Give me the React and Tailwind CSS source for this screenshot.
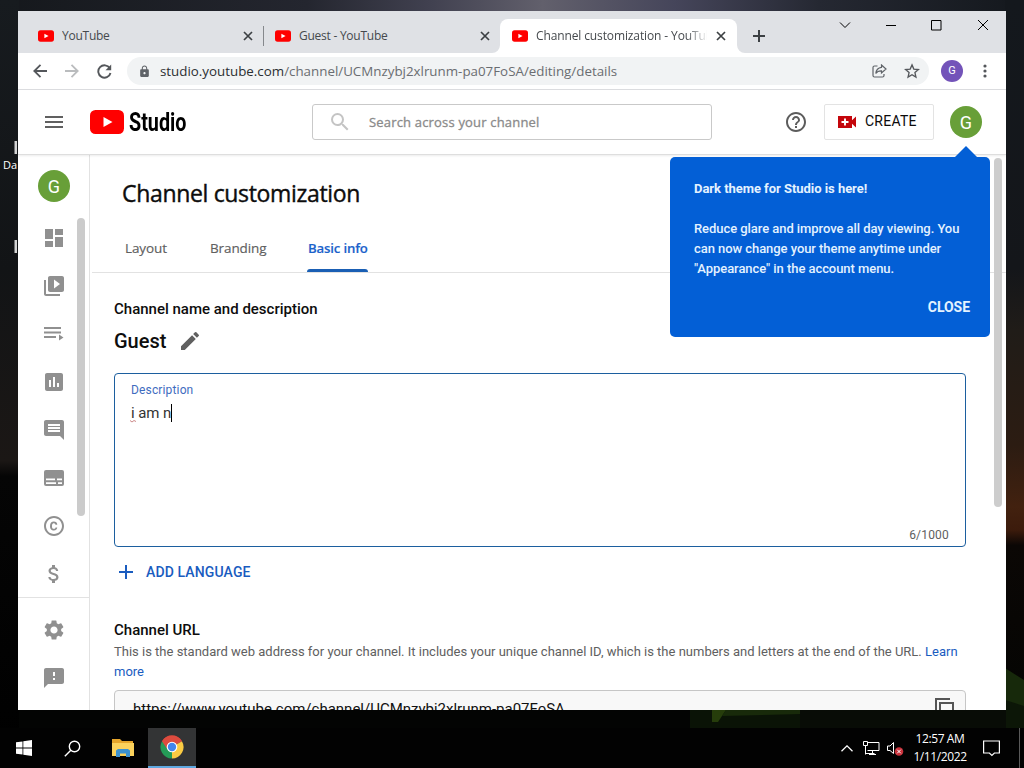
import React from 'react';
import {
  MdDashboard, MdVideoLibrary, MdInsertChart, MdComment, MdCopyright, MdAttachMoney,
  MdSettings, MdFeedback, MdEdit, MdHelpOutline, MdSearch, MdMenu, MdLock,
} from 'react-icons/md';

const tabs = [
  { title: 'YouTube', active: false },
  { title: 'Guest - YouTube', active: false },
  { title: 'Channel customization - YouTube', active: true },
];

function PlayBadge({ className }) {
  return (
    <svg className={className} viewBox="0 0 34 24">
      <rect width="34" height="24" rx="5.5" fill="#f00" />
      <path d="M13.5 7v10l9-5z" fill="#fff" />
    </svg>
  );
}

function PlaylistIcon() {
  return (
    <svg width="24" height="24" viewBox="0 0 24 24" fill="currentColor">
      <path d="M2 5h17v2H2zM2 9.5h17v2H2zM2 14h12v2H2zM17 12.500v6l4.500-3z" />
    </svg>
  );
}

function SubtitlesIcon() {
  return (
    <svg width="24" height="24" viewBox="0 0 24 24" fill="currentColor">
      <rect x="2" y="4" width="20" height="16" rx="2" />
      <path d="M4 12.500h9v1.700H4zM15 12.500h5v1.700h-5zM4 16.200h10v1.700H4zM16 16.200h4v1.700h-4z" fill="#fff" />
    </svg>
  );
}

const navIcons = [MdDashboard, MdVideoLibrary, PlaylistIcon, MdInsertChart, MdComment, SubtitlesIcon, MdCopyright, MdAttachMoney];

function Wallpaper() {
  return (
    <svg className="absolute inset-0" width="1024" height="768" viewBox="0 0 1024 768">
      <defs>
        <linearGradient id="sky" x1="0" x2="1" y1="0" y2="0">
          <stop offset="0" stopColor="#15181c" />
          <stop offset="0.3" stopColor="#24262f" />
          <stop offset="0.42" stopColor="#414150" />
          <stop offset="0.53" stopColor="#62606c" />
          <stop offset="0.66" stopColor="#45455a" />
          <stop offset="0.8" stopColor="#252832" />
          <stop offset="1" stopColor="#14181d" />
        </linearGradient>
        <linearGradient id="left" x1="0" x2="0" y1="0" y2="1">
          <stop offset="0" stopColor="#171b1f" />
          <stop offset="0.35" stopColor="#121416" />
          <stop offset="0.6" stopColor="#1b1715" />
          <stop offset="0.62" stopColor="#050505" />
          <stop offset="1" stopColor="#000" />
        </linearGradient>
        <linearGradient id="right" x1="0" x2="0" y1="0" y2="1">
          <stop offset="0" stopColor="#14181d" />
          <stop offset="0.35" stopColor="#14161a" />
          <stop offset="0.43" stopColor="#201c18" />
          <stop offset="0.58" stopColor="#2c1c12" />
          <stop offset="0.66" stopColor="#42210f" />
          <stop offset="0.69" stopColor="#3c1b0c" />
          <stop offset="0.71" stopColor="#0b0705" />
          <stop offset="1" stopColor="#020402" />
        </linearGradient>
      </defs>
      <rect width="1024" height="768" fill="#030403" />
      <rect width="1024" height="12" fill="url(#sky)" />
      <rect y="0" width="19" height="768" fill="url(#left)" />
      <rect x="1005" width="19" height="768" fill="url(#right)" />
      <path d="M1005 668l19 12v48h-19z" fill="#17290b" />
      <path d="M1005 700l19 6v22h-19z" fill="#0c1607" />
      <path d="M690 710h110v18H690z" fill="#0a1306" />
      <path d="M712 710h14l-8 12h-6z" fill="#263d0b" />
      <path d="M726 710h76v4l-80 2z" fill="#182a0a" />
      <path d="M800 710h206v18H800z" fill="#080c06" />
      <path d="M14.500 141h2.500v13h-2.500zM14.500 240h2.500v13h-2.500z" fill="#d5d5d5" />
    </svg>
  );
}

function TabStrip() {
  return (
    <div className="flex h-[42px] bg-[#dfe1e5] pt-2 font-['Open_Sans','Noto_Sans',sans-serif]">
      <div className="ml-[9px] flex">
        {tabs.map((tab, i) => (
          <div
            key={tab.title}
            className={`relative flex h-[34px] items-center text-[12px] text-[#45494d] ${
              tab.active ? 'ml-[-1px] w-[237px] rounded-t-lg bg-white pl-3' : 'w-[237px] pl-[11px]'
            }`}
          >
            <PlayBadge className="h-3 w-4 shrink-0" />
            <div
              className={`ml-2 overflow-hidden whitespace-nowrap ${
                tab.active ? 'w-[171px] tracking-[-0.12px] [mask-image:linear-gradient(to_right,black_150px,transparent_172px)]' : 'w-[172px] tracking-[-0.25px]'
              }`}
            >
              {tab.title}
            </div>
            <svg className="ml-[9px] shrink-0" width="10" height="10" viewBox="0 0 10 10" stroke="#3c4043" strokeWidth="1.700">
              <path d="M1 1l8 8M9 1l-8 8" />
            </svg>
            {i === 0 && <div className="absolute right-0 top-[7px] h-5 w-px bg-[#85888c]" />}
            {tab.active && (
              <>
                <svg className="absolute -left-2 bottom-0" width="8" height="8"><path d="M8 0v8H0a8 8 0 0 0 8-8z" fill="#fff" /></svg>
                <svg className="absolute -right-2 bottom-0" width="8" height="8"><path d="M0 0v8h8a8 8 0 0 1-8-8z" fill="#fff" /></svg>
              </>
            )}
          </div>
        ))}
      </div>
      <svg className="ml-4 mt-[11px]" width="12" height="12" viewBox="0 0 12 12" stroke="#3c4043" strokeWidth="2"><path d="M6 0v12M0 6h12" /></svg>
      <div className="ml-auto mr-[17px] flex items-start gap-[35px] text-black">
        <svg width="12" height="12" viewBox="0 0 12 12" fill="none" stroke="currentColor"><path d="M1 3.500l5 5 5-5" /></svg>
        <svg width="10" height="12" viewBox="0 0 10 12" stroke="currentColor"><path d="M0 6.500h10" /></svg>
        <svg width="11" height="12" viewBox="0 0 11 12" fill="none" stroke="currentColor"><path d="M.5 1.500h9.500v9.500H.5z" /></svg>
        <svg width="12" height="12" viewBox="0 0 12 12" stroke="currentColor"><path d="M1 1l10 10M11 1L1 11" /></svg>
      </div>
    </div>
  );
}

function Toolbar() {
  return (
    <div className="flex h-[37px] items-center border-b border-[#dcdde0] bg-white pl-[15px]">
      <svg width="14" height="14" viewBox="0 0 14 14" fill="none" stroke="#54575b" strokeWidth="1.800"><path d="M14 7H1.500M7.500 .8L1.300 7l6.200 6.200" /></svg>
      <svg className="ml-[18px]" width="14" height="14" viewBox="0 0 14 14" fill="none" stroke="#babcbe" strokeWidth="1.800"><path d="M0 7h12.500M6.500 .8L12.700 7l-6.200 6.200" /></svg>
      <svg className="ml-[18px]" width="15" height="15" viewBox="0 0 15 15" fill="none" stroke="#54575b" strokeWidth="1.900">
        <path d="M12.800 4.300A6.200 6.200 0 1 0 13.500 9" />
        <path d="M14.200 .6v5.700H8.500z" fill="#54575b" stroke="none" />
      </svg>
      <div className="ml-[15px] flex h-7 w-[802px] items-center rounded-full bg-[#f1f3f4] pl-[11px]">
        <MdLock size={13} color="#5f6368" />
        <div className="ml-[9px] whitespace-nowrap pt-px font-['Open_Sans','Noto_Sans',sans-serif] text-[13.350px] text-[#6a6d71]">
          <span className="text-[#2b2e31]">studio.youtube.com</span>/channel/UCMnzybj2xlrunm-pa07FoSA/editing/details
        </div>
        <svg className="ml-auto" width="15" height="14" viewBox="0 0 15 14" fill="none" stroke="#5f6368" strokeWidth="1.200">
          <path d="M5.500 2H2.500Q1 2 1 3.500v8Q1 13 2.500 13h8Q12 13 12 11.500V10" />
          <path d="M9.500 1l4.500 4-4.500 4V6.800Q5.500 6.700 3.800 9.500 4.300 4 9.500 3.300z" />
        </svg>
        <svg className="ml-[17px] mr-[9px]" width="16" height="16" viewBox="0 0 24 24" fill="none" stroke="#54575b" strokeWidth="2">
          <path d="M12 2.800l2.700 6.400 6.900.6-5.200 4.600 1.500 6.800-5.900-3.600-5.900 3.600 1.500-6.800L2.400 9.800l6.900-.6z" />
        </svg>
      </div>
      <div className="ml-3 flex size-[22px] items-center justify-center rounded-full bg-[#7353b9] font-['Roboto',sans-serif] text-[11px] text-white">G</div>
      <svg className="ml-5" width="4" height="14" viewBox="0 0 4 14" fill="#54575b"><circle cx="2" cy="2" r="1.600" /><circle cx="2" cy="7" r="1.600" /><circle cx="2" cy="12" r="1.600" /></svg>
    </div>
  );
}

function StudioHeader() {
  return (
    <div className="relative z-10 flex h-[65px] items-center border-b border-[#dedede] bg-white pl-6 shadow-[0_1px_2px_rgba(0,0,0,0.08)]">
      <MdMenu size={24} color="#606060" />
      <PlayBadge className="ml-6 h-6 w-[34px]" />
      <div className="ml-[5px] w-[60px] font-['Roboto',sans-serif] text-[26px] font-bold leading-none text-black">
        <div className="w-[100px] origin-left scale-x-[0.76]">Studio</div>
      </div>
      <div className="ml-[123px] flex h-9 w-[400px] items-center rounded-[3px] border border-[#c9c9c9] pl-[15px]">
        <MdSearch size={24} color="#c4c4c4" />
        <div className="ml-[17px] pt-px font-['Open_Sans',sans-serif] text-[13px] tracking-[0.18px] text-[#8a8a8a] [-webkit-text-stroke:0.3px]">Search across your channel</div>
      </div>
      <MdHelpOutline className="ml-[72px]" size={24} color="#5c5c5c" />
      <div className="ml-4 flex h-9 w-[110px] items-center rounded-[2px] border border-[#e3e3e3] pl-[13px]">
        <svg width="18" height="12" viewBox="0 0 18 12">
          <path d="M0 0h14v4.200L18 .6v10.800l-4-3.600V12H0z" fill="#c4060c" />
          <path d="M7 2.500v7M3.500 6h7" stroke="#fff" strokeWidth="1.900" />
        </svg>
        <div className="ml-[9px] pb-px font-['Roboto',sans-serif] text-[14px] tracking-[0.25px] text-[#0b0b0b]">CREATE</div>
      </div>
      <div className="ml-4 flex size-8 items-center justify-center rounded-full bg-[#689f38] font-['Roboto',sans-serif] text-[18px] text-white">G</div>
    </div>
  );
}

function Sidebar() {
  return (
    <div className="relative h-[555px] w-[72px] shrink-0 border-r border-[#e2e2e2] pt-[15px] text-[#909090]">
      <div className="ml-5 flex size-8 items-center justify-center rounded-full bg-[#689f38] font-['Roboto',sans-serif] text-[18px] text-white">G</div>
      <div className="ml-6 mt-6 flex flex-col gap-6">
        {navIcons.map((Icon, i) => <Icon key={i} size={24} />)}
      </div>
      <div className="mt-[11px] flex flex-col gap-6 border-t border-[#e2e2e2] pl-6 pt-5">
        <MdSettings size={24} />
        <MdFeedback size={24} />
      </div>
      <div className="absolute left-[59px] top-[63px] h-[298px] w-2 rounded-full bg-[#cbcbcb]" />
    </div>
  );
}

function ChannelForm() {
  return (
    <div className="relative h-[555px] flex-1 overflow-hidden font-['Roboto',sans-serif]">
      <div className="ml-8 mt-[22px] font-['Open_Sans','Noto_Sans',sans-serif] text-[23px] leading-8 tracking-[-0.33px] text-[#0d0d0d] [-webkit-text-stroke:0.4px]">Channel customization</div>
      <div className="ml-[2px] mt-[15px] flex h-[49px] border-b border-[#e2e2e2] pl-[33px] font-['Open_Sans','Noto_Sans',sans-serif] text-[13.500px] leading-[49px] tracking-[-0.1px] text-[#606060] [-webkit-text-stroke:0.15px]">
        <div className="w-[85px]">Layout</div>
        <div className="w-[97px]">Branding</div>
        <div className="relative w-[61px] whitespace-nowrap pl-px text-[13.200px] font-semibold tracking-[-0.16px] text-[#1a62cb]">
          Basic info
          <div className="absolute bottom-0 left-0 h-[3px] w-full rounded-t-sm bg-[#1a5fb4]" />
        </div>
      </div>
      <div className="ml-6 mt-[26px] w-[852px]">
        <div className="text-[15px] font-medium leading-5 text-[#0d0d0d]">Channel name and description</div>
        <div className="mt-[10px] flex h-6 items-center">
          <span className="text-[20px] font-medium text-[#0d0d0d]">Guest</span>
          <MdEdit className="ml-3" size={24} color="#606060" />
        </div>
        <div className="relative mt-5 h-[174px] rounded border border-[#1c5f9f] pl-4 pt-[7px]">
          <div className="text-[12px] leading-[18px] tracking-[0.15px] text-[#3f6cc0]">Description</div>
          <div className="mt-[5px] flex h-[18px] items-center text-[15px] tracking-[-0.1px] text-[#333]">
            <span>i am n</span>
            <div className="h-[18px] w-px bg-black" />
          </div>
          <svg className="absolute left-[15px] top-[46px]" width="6" height="3" fill="none" stroke="#c88"><path d="M0 .5l2 1.500 2-1.500 2 1" /></svg>
          <div className="absolute bottom-[2px] right-4 text-[12px] tracking-[0.2px] text-[#606060]">6/1000</div>
        </div>
        <div className="mt-[15px] flex h-5 items-center pl-[5px]">
          <svg width="14" height="14" viewBox="0 0 14 14" stroke="#1a5cbf" strokeWidth="2"><path d="M7 0v14M0 7h14" /></svg>
          <div className="ml-[13px] text-[14px] font-medium tracking-[0.12px] text-[#1a5cbf]">ADD LANGUAGE</div>
        </div>
        <div className="mt-[38px] text-[15px] font-medium leading-5 text-[#0d0d0d]">Channel URL</div>
        <div className="mt-[2px] text-[13px] leading-5 text-[#606060]">
          This is the standard web address for your channel. It includes your unique channel ID, which is the numbers and letters at the end of the URL. <span className="text-[#1a5cbf]">Learn<br />more</span>
        </div>
        <div className="mt-2 flex h-10 items-start rounded border border-[#c6c6c6] bg-[#f8f8f8] pl-[18px]">
          <div className="mt-2 whitespace-nowrap text-[15px] leading-5 text-[#111]">https://www.youtube.com/channel/UCMnzybj2xlrunm-pa07FoSA</div>
          <svg className="ml-auto mr-[10px] mt-[7px]" width="20" height="22" viewBox="0 0 20 22" fill="none" stroke="#555" strokeWidth="2">
            <path d="M1 18V1h14M5 5h13v16H5z" />
          </svg>
        </div>
      </div>
      <div className="absolute right-1 top-[3px] h-[349px] w-2 rounded-full bg-[#cdcdcd]" />
    </div>
  );
}

function ThemeTip() {
  return (
    <div className="absolute left-[652px] top-[146px] z-20 h-[180px] w-[320px] rounded-[5px] bg-[#035fd6] px-6 pt-[22px] font-['Roboto',sans-serif] text-[13px] font-medium leading-5 text-[#e4f2ff]">
      <svg className="absolute right-3 top-[-11px]" width="24" height="12" viewBox="0 0 24 12"><path d="M12 0l12 12H0z" fill="#035fd6" /></svg>
      <div className="font-bold tracking-[-0.04px]">Dark theme for Studio is here!</div>
      <div className="mt-5 whitespace-nowrap tracking-[-0.06px]">
        Reduce glare and improve all day viewing. You<br />
        can now change your theme anytime under<br />
        "Appearance" in the account menu.
      </div>
      <div className="mr-[-4px] mt-[18px] text-right text-[14px] font-bold tracking-[-0.05px]">CLOSE</div>
    </div>
  );
}

function Taskbar() {
  return (
    <div className="relative mt-[18px] flex h-10 items-center bg-[#020202] font-['Open_Sans','Noto_Sans',sans-serif] text-white">
      <svg className="ml-4" width="16" height="16" viewBox="0 0 16 16" fill="#fff">
        <path d="M0 2.300l6.500-.9v6.100H0zM7.300 1.300L16 0v7.500H7.300zM0 8.400h6.500v6.200L0 13.700zM7.300 8.400H16V16l-8.700-1.200z" />
      </svg>
      <svg className="ml-8" width="17" height="17" viewBox="0 0 17 17" fill="none" stroke="#fff" strokeWidth="1.400">
        <circle cx="10.500" cy="6.500" r="5.200" /><path d="M6.800 10.300L.8 16.300" />
      </svg>
      <svg className="ml-[31px]" width="22" height="18" viewBox="0 0 22 18">
        <path d="M0 0h8l2 2h11v15H0z" fill="#e5a52b" />
        <path d="M0 4h22v13H0z" fill="#fbd25c" />
        <path d="M4 18v-6.500l2-1.500h10l2 1.500V18h-4v-3.500H8V18z" fill="#3c92cf" />
      </svg>
      <div className="ml-[14px] flex h-10 w-12 items-center justify-center border-b-2 border-[#5fa8e0] bg-[#333435]">
        <svg width="24" height="24" viewBox="0 0 24 24">
          <path d="M12 12L2.040 6.250A11.500 11.500 0 0 1 21.960 6.250z" fill="#dd4b3e" />
          <path d="M12 12L2.040 6.250A11.500 11.500 0 0 0 12 23.500z" fill="#259b57" />
          <path d="M12 12L12 23.500A11.500 11.500 0 0 0 21.960 6.250z" fill="#fbcb43" />
          <path d="M2.040 6.250L7.400 14.600 12 12l-2-4z" fill="#259b57" />
          <path d="M2.040 6.250A11.500 11.500 0 0 1 21.960 6.250L12 6.800 7.500 14.500z" fill="#dd4b3e" />
          <circle cx="12" cy="12" r="5.300" fill="#fff" />
          <circle cx="12" cy="12" r="4.200" fill="#4385ec" />
        </svg>
      </div>
      <div className="ml-auto flex items-center">
        <svg width="12" height="7" viewBox="0 0 12 7" fill="none" stroke="#fff" strokeWidth="1.300"><path d="M.5 6.300L6 .9l5.500 5.400" /></svg>
        <svg className="ml-[10px]" width="17" height="14" viewBox="0 0 17 14" fill="none" stroke="#fff">
          <path d="M5 1.500h11v8H4.500M.5 .5h4v4h-4zM2.500 4.500v9M2.500 12.500h9M9.500 9.500v3M6 13.500h7" />
        </svg>
        <svg className="ml-[7px]" width="17" height="15" viewBox="0 0 17 15">
          <path d="M.5 5h2.500L6.500 1.500v11L3 9.500H.5z" fill="none" stroke="#fff" />
          <circle cx="12" cy="10.500" r="4.300" fill="#c9323c" />
          <path d="M10.200 8.700l3.600 3.600M13.800 8.700l-3.600 3.600" stroke="#fff" />
        </svg>
        <div className="ml-2 w-[56px] whitespace-nowrap text-center text-[12px] leading-[18px] tracking-[-0.4px]">
          <div>12:57 AM</div>
          <div>1/11/2022</div>
        </div>
        <svg className="ml-[15px]" width="17" height="17" viewBox="0 0 17 17" fill="none" stroke="#fff" strokeWidth="1.200"><path d="M.6 1h15.800v12h-5l-2.500 2.500L6.400 13H.6z" /></svg>
        <div className="ml-[19px] mr-1 h-10 w-px bg-[#5a5a5a]" />
      </div>
    </div>
  );
}

export default function App() {
  return (
    <div className="relative h-[768px] w-[1024px] overflow-hidden bg-black">
      <Wallpaper />
      <div className="relative h-[710px] pl-[18px] pt-[11px]">
        <div className="absolute left-[3px] top-[158px] w-[15px] overflow-hidden font-['Open_Sans',sans-serif] text-[11px] leading-[14px] text-white">Da</div>
        <div className="relative h-[699px] w-[988px] overflow-hidden bg-white">
          <TabStrip />
          <Toolbar />
          <StudioHeader />
          <div className="flex">
            <Sidebar />
            <ChannelForm />
          </div>
          <ThemeTip />
        </div>
      </div>
      <Taskbar />
    </div>
  );
}
